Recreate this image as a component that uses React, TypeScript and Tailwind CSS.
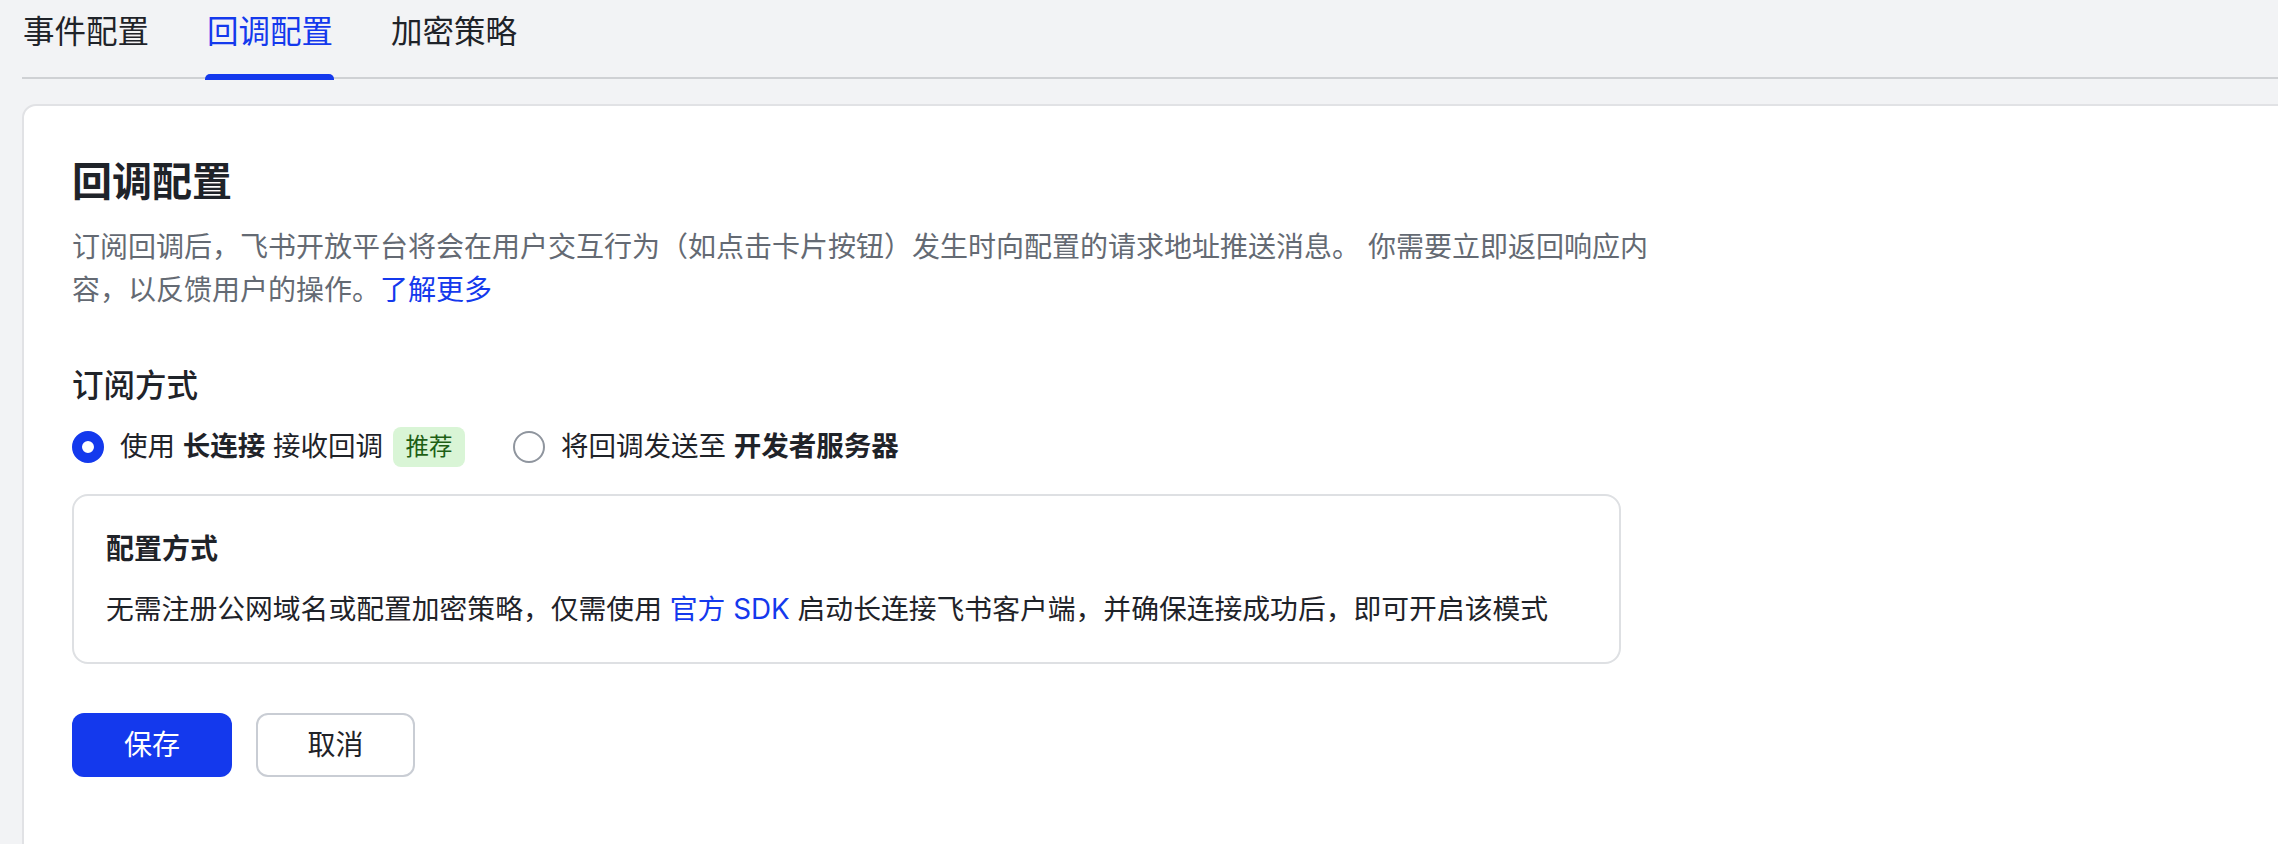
import React from 'react';

const tabs = ['事件配置', '回调配置', '加密策略'];

export default function App() {
  const active = 1;

  return (
    <div className="min-h-screen w-full overflow-hidden bg-[#f2f3f5] pl-[22px] font-['Inter','Noto_Sans_CJK_SC',sans-serif] text-[#1f2329]">
      {/* Tabs */}
      <div className="flex h-[79px] gap-[58px] border-b-2 border-[#cfd1d4] pl-[1px]">
        {tabs.map((t, i) => (
          <div
            key={t}
            className={
              i === active
                ? 'relative h-full pt-[10px] text-[31.5px] leading-[44px] text-[#1439ed]'
                : 'relative h-full pt-[10px] text-[31.5px] leading-[44px] text-[#1f2329]'
            }
          >
            {t}
            {i === active && (
              <div className="absolute -left-[2px] -right-[1px] -bottom-[3px] h-[6px] rounded-t-[5px] bg-[#1439ed]" />
            )}
          </div>
        ))}
      </div>

      {/* Card */}
      <div className="mt-[25px] h-[800px] w-[2300px] rounded-[14px] border-2 border-[#e1e2e5] bg-white pl-[48px] pt-[50px]">
        <h1 className="text-[40px] font-semibold leading-[52px]">回调配置</h1>
        <p className="mt-[18px] w-[1590px] text-[28px] leading-[43px] text-[#646a73]">
          订阅回调后，飞书开放平台将会在用户交互行为（如点击卡片按钮）发生时向配置的请求地址推送消息。 你需要立即返回响应内容，以反馈用户的操作。
          <span className="text-[#1439ed]">了解更多</span>
        </p>

        <h2 className="mt-[52px] text-[31.5px] font-medium leading-[44px]">订阅方式</h2>

        {/* Radios */}
        <div className="mt-[19px] flex h-[40px] items-center text-[27.5px]">
          <div className="flex items-center">
            <span className="h-8 w-8 rounded-full border-[10px] border-[#1439ed] bg-white" />
            <span className="ml-[16px]">
              使用 <span className="font-semibold">长连接</span> 接收回调
            </span>
            <span className="ml-[10px] flex h-[40px] w-[72px] items-center justify-center rounded-[8px] bg-[#d9f5d6] text-[23.5px] text-[#1d5f14]">
              推荐
            </span>
          </div>
          <div className="ml-[48px] flex items-center">
            <span className="h-8 w-8 rounded-full border-2 border-[#8f959e] bg-white" />
            <span className="ml-[16px]">
              将回调发送至 <span className="font-semibold">开发者服务器</span>
            </span>
          </div>
        </div>

        {/* Config box */}
        <div className="mt-[27px] h-[170px] w-[1549px] rounded-[16px] border-2 border-[#dee0e3] pl-[32px] pt-[33px]">
          <div className="text-[28px] font-semibold leading-[40px]">配置方式</div>
          <div className="mt-[20px] text-[27.8px] leading-[40px]">
            无需注册公网域名或配置加密策略，仅需使用 <span className="text-[#1439ed]">官方 SDK</span> 启动长连接飞书客户端，并确保连接成功后，即可开启该模式
          </div>
        </div>

        {/* Buttons */}
        <div className="mt-[49px] flex gap-[24px]">
          <button className="flex h-[64px] w-[160px] items-center justify-center rounded-[12px] bg-[#1439ed] text-[28px] text-white">
            保存
          </button>
          <button className="flex h-[64px] w-[159px] items-center justify-center rounded-[12px] border-2 border-[#c9cdd4] bg-white text-[28px] text-[#1f2329]">
            取消
          </button>
        </div>
      </div>
    </div>
  );
}
